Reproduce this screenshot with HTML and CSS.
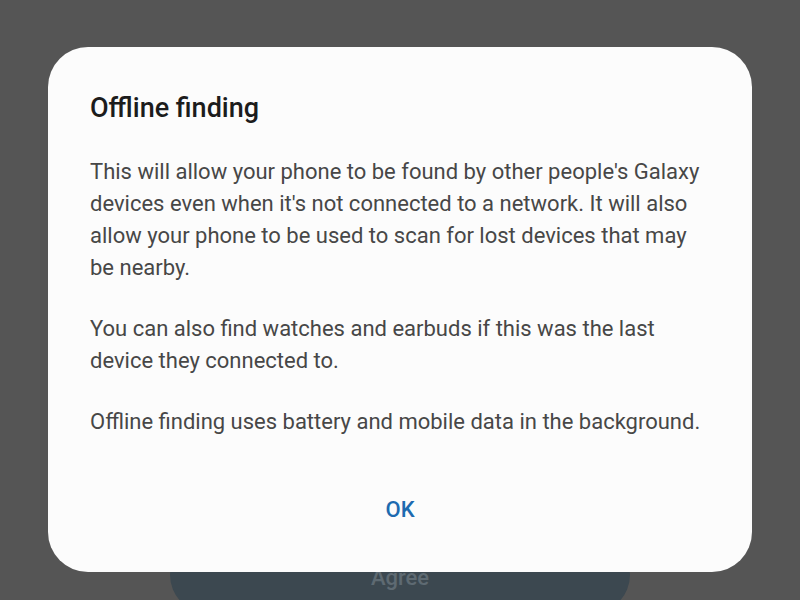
FILE: index.html
```html
<!DOCTYPE html>
<html>
<head>
<meta charset="utf-8">
<link rel="stylesheet" href="styles.css">
</head>
<body>
<div class="screen">
  <div class="agree-bar"><span class="agree">Agree</span></div>
  <div class="dialog">
    <h1 class="title">Offline finding</h1>
    <div class="body">
      <p>This will allow your phone to be found by other people's Galaxy devices even when it's not connected to a network. It will also allow your phone to be used to scan for lost devices that may be nearby.</p>
      <p>You can also find watches and earbuds if this was the last device they connected to.</p>
      <p>Offline finding uses battery and mobile data in the background.</p>
    </div>
    <div class="actions"><span class="ok">OK</span></div>
  </div>
</div>
</body>
</html>
```
FILE: styles.css
```css
html, body {
  margin: 0;
  padding: 0;
  background: #555555;
}
.screen {
  position: relative;
  width: 800px;
  height: 600px;
  overflow: hidden;
  font-family: Roboto, "Noto Sans", sans-serif;
  display: flex;
  flex-direction: column;
  align-items: center;
}
.agree-bar {
  margin-top: 537px;
  width: 460px;
  height: 76px;
  border-radius: 38px;
  background: #3c4850;
  display: flex;
  justify-content: center;
  align-items: center;
  flex-shrink: 0;
}
.agree {
  color: #5e6a72;
  font-size: 22px;
  font-weight: 500;
  margin-top: 4px;
}
.dialog {
  position: absolute;
  left: 48px;
  top: 47px;
  width: 704px;
  height: 525px;
  box-sizing: border-box;
  background: #fcfcfc;
  border-radius: 40px;
  padding: 45px 42px 0 42px;
  display: flex;
  flex-direction: column;
}
.title {
  margin: 0;
  font-size: 27px;
  font-weight: 500;
  line-height: 32px;
  color: #1c1c1c;
}
.body {
  margin-top: 32px;
  color: #474747;
  font-size: 22px;
  line-height: 32px;
}
.body p {
  margin: 0 0 29px 0;
}
.actions {
  display: flex;
  justify-content: center;
  margin-top: 27px;
}
.ok {
  color: #1d6bb0;
  font-size: 22px;
  font-weight: 500;
  line-height: 32px;
}
```
